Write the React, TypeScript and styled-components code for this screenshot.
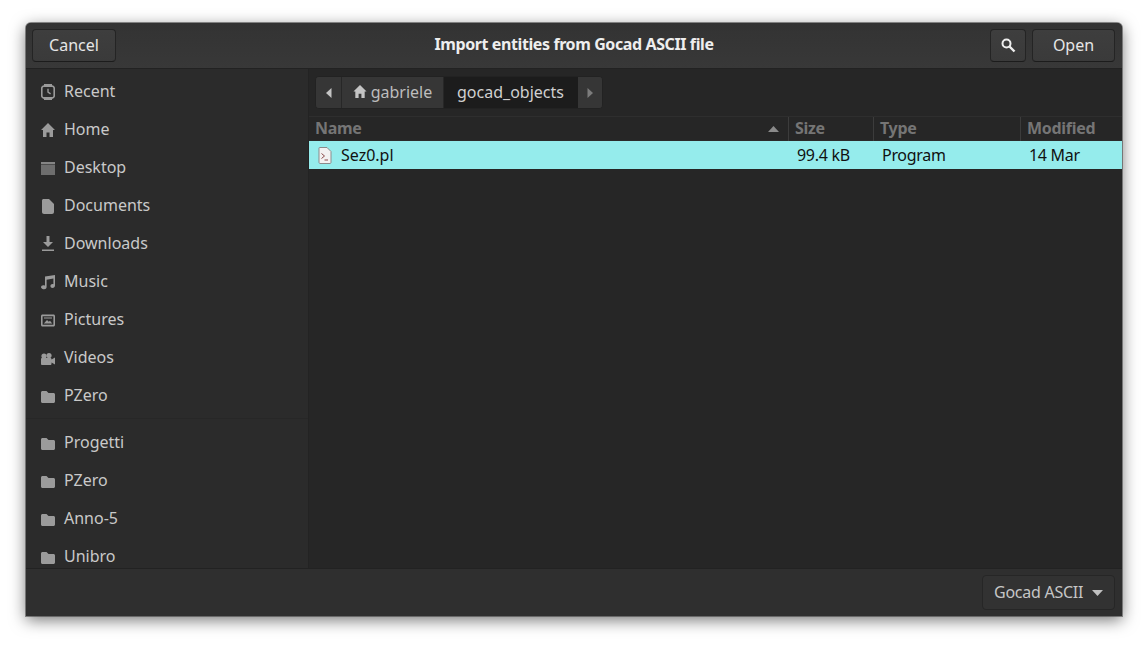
import styled, { createGlobalStyle } from "styled-components"

const GlobalStyle = createGlobalStyle`
  html, body {
    margin: 0;
    height: 645px;
    background: #fff;
    overflow: hidden;
    font-family: "Noto Sans", "Open Sans", sans-serif;
  }
  * { box-sizing: border-box; }
`

const Page = styled.div`
  width: 1148px;
  height: 645px;
  padding: 23px 26px 29px;
`

const Dialog = styled.div`
  width: 1096px;
  height: 593px;
  display: flex;
  flex-direction: column;
  border-radius: 5px 5px 0 0;
  background: #2b2b2b;
  overflow: hidden;
  box-shadow: 0 0 0 1px rgba(60, 60, 60, 0.55), 0 4px 16px rgba(0, 0, 0, 0.55);
`

const HeaderBar = styled.header`
  height: 46px;
  flex: none;
  display: flex;
  align-items: center;
  padding: 0 7px 0 6px;
  gap: 6px;
  background: linear-gradient(#333333, #383838);
  border-bottom: 1px solid #222;
`

const Title = styled.div`
  flex: 1;
  text-align: center;
  color: #eeeeee;
  font-size: 16px;
  font-weight: 700;
  letter-spacing: -0.4px;
  padding: 0 0 3px 42px;
`

const HeaderButton = styled.button<{ $w: number }>`
  width: ${(p) => p.$w}px;
  height: 33px;
  padding: 0 0 2px;
  display: flex;
  align-items: center;
  justify-content: center;
  border: 1px solid #242424;
  border-bottom-color: #1c1c1c;
  border-radius: 4px;
  background: linear-gradient(#3e3e3e, #3a3a3a);
  color: #e6e6e6;
  font: inherit;
  font-size: 16px;
`

const Body = styled.div`
  flex: 1;
  min-height: 0;
  display: flex;
`

const Sidebar = styled.nav`
  width: 283px;
  flex: none;
  background: #2b2b2b;
  border-right: 1px solid #232323;
  overflow: hidden;
  padding-top: 3px;
`

const Place = styled.div`
  height: 38px;
  display: flex;
  align-items: center;
  padding-left: 15px;
  gap: 9px;
  color: #c9c9c9;
  font-size: 16px;
`

const PlaceIcon = styled.svg`
  width: 14px;
  height: 16px;
  flex: none;
  fill: #9b9b9b;
  margin-top: 2px;
`

const Separator = styled.div`
  height: 1px;
  background: #272727;
  margin: 4px 0 4px;
`

const Main = styled.main`
  flex: 1;
  min-width: 0;
  display: flex;
  flex-direction: column;
  background: #262626;
`

const PathRow = styled.div`
  height: 47px;
  flex: none;
  display: flex;
  align-items: center;
  padding-left: 6px;
`

const PathBar = styled.div`
  display: flex;
  height: 33px;
  border: 1px solid #222;
  border-radius: 4px;
  overflow: hidden;
  background: #333;
`

const PathButton = styled.div<{ $w: number; $active?: boolean }>`
  width: ${(p) => p.$w}px;
  padding-bottom: 2px;
  display: flex;
  align-items: center;
  justify-content: center;
  gap: 4px;
  font-size: 16px;
  color: ${(p) => (p.$active ? "#d0d0d0" : "#bdbdbd")};
  background: ${(p) => (p.$active ? "#1c1c1c" : "#363636")};
  border-right: 1px solid ${(p) => (p.$active ? "#1c1c1c" : "#272727")};
  &:last-child {
    border-right: 0;
  }
`

const PathHome = styled.svg`
  width: 14px;
  height: 15px;
  flex: none;
  fill: #c4c4c4;
`

const Arrow = styled.svg<{ $dim?: boolean }>`
  width: 8px;
  height: 10px;
  margin-top: 2px;
  fill: ${(p) => (p.$dim ? "#7c7c7c" : "#c4c4c4")};
`

const ColumnHeader = styled.div`
  height: 25px;
  flex: none;
  display: grid;
  grid-template-columns: 480px 85px 147px 1fr;
  border-top: 1px solid #2e2e2e;
  border-bottom: 1px solid #2b2b2b;
`

const ColumnTitle = styled.div`
  display: flex;
  align-items: center;
  justify-content: space-between;
  padding: 0 9px 2px 6px;
  color: #757575;
  font-size: 16px;
  font-weight: 700;
  letter-spacing: -0.3px;
  border-right: 1px solid #3c3c3c;
  &:last-child {
    border-right: 0;
  }
`

const SortCaret = styled.svg`
  width: 11px;
  height: 6px;
  margin-top: 2px;
  fill: #8a8a8a;
`

const FileRow = styled.div`
  height: 28px;
  flex: none;
  display: grid;
  grid-template-columns: 480px 85px 147px 1fr;
  align-items: center;
  background: #95ecec;
  color: #111;
  font-size: 16px;
`

const NameCell = styled.div`
  display: flex;
  align-items: center;
  gap: 9px;
  padding-left: 9px;
`

const DataCell = styled.div`
  padding-left: 8px;
  letter-spacing: -0.3px;
`

const Footer = styled.footer`
  height: 48px;
  flex: none;
  display: flex;
  align-items: center;
  justify-content: flex-end;
  padding-right: 7px;
  background: #2f2f2f;
  border-top: 1px solid #222;
`

const FilterButton = styled.div`
  width: 133px;
  height: 35px;
  display: flex;
  align-items: center;
  justify-content: space-between;
  padding: 0 11px 2px 11px;
  border: 1px solid #262626;
  border-radius: 4px;
  background: #323232;
  color: #c6c6c6;
  font-size: 16px;
  letter-spacing: -0.25px;
`

const FilterCaret = styled.svg`
  width: 11px;
  height: 6px;
  margin-top: 2px;
  fill: #c0c0c0;
`

const folder = (
  <path d="M0 4.5C0 3.7.7 3 1.5 3H5.5L7.5 5H12.5C13.3 5 14 5.7 14 6.5V13.5C14 14.3 13.3 15 12.5 15H1.5C.7 15 0 14.3 0 13.5Z" />
)

const home = <path d="M7 1L14 8H12V15H8.5V10.5H5.5V15H2V8H0Z" />

const icons: Record<string, React.ReactNode> = {
  recent: (
    <path
      fillRule="evenodd"
      d="M3 0H11V1.2C12.7 1.5 14 2.6 14 4V12C14 13.4 12.7 14.6 11 14.9V16H3V14.9C1.3 14.6 0 13.4 0 12V4C0 2.6 1.3 1.5 3 1.2ZM3 3C2.2 3 1.6 3.6 1.6 4.3V11.7C1.6 12.4 2.2 13 3 13H11C11.8 13 12.4 12.4 12.4 11.7V4.3C12.4 3.6 11.8 3 11 3ZM6.3 4.8H7.7V7.7L10 9.3 9.2 10.4 6.3 8.4Z"
    />
  ),
  home,
  desktop: (
    <>
      <path d="M0 2H14V4H0Z" fill="#858585" />
      <path d="M0 4.5H14V15H0Z" fill="#6e6e6e" />
    </>
  ),
  documents: <path d="M2.5 1H8L13 6V14C13 15.1 12.1 16 11 16H3C1.9 16 1 15.1 1 14V2.5C1 1.7 1.7 1 2.5 1Z" />,
  downloads: <path d="M5.5 0H8.5V6H12L7 11 2 6H5.5ZM1 13.5H13V15H1Z" />,
  music: (
    <path d="M4 2.6L14 1V11.5C14 13 12.9 14 11.6 14 10.3 14 9.4 13.1 9.4 12 9.4 10.9 10.3 10 11.6 10 11.9 10 12.2 10 12.4 10.2V4.6L5.6 5.7V13C5.6 14.3 4.5 15.3 3.2 15.3 1.9 15.3 0 14.4 0 13.2 0 12.1 1 11.3 2.3 11.3 3 11.3 3.6 11.4 4 11.7Z" />
  ),
  pictures: (
    <path
      fillRule="evenodd"
      d="M1.5 2.5H12.5C13.3 2.5 14 3.2 14 4V13C14 13.8 13.3 14.5 12.5 14.5H1.5C.7 14.5 0 13.8 0 13V4C0 3.2.7 2.5 1.5 2.5ZM1.6 4.2V12.8H12.4V4.2ZM2.8 11.5L6 8 7.8 9.8 9 8.7 11.2 11.5ZM3 5.5H11V6.6H3Z"
    />
  ),
  videos: (
    <>
      <circle cx="3" cy="6" r="2.6" />
      <circle cx="8" cy="5.6" r="2.6" />
      <path d="M1 8H9.5C10 8 10.5 8.5 10.5 9V9.6L14 7.6V14.4L10.5 12.4V14C10.5 14.5 10 15 9.5 15H1C.5 15 0 14.5 0 14V9C0 8.5.5 8 1 8Z" />
    </>
  ),
  folder,
}

const topPlaces = [
  ["recent", "Recent"],
  ["home", "Home"],
  ["desktop", "Desktop"],
  ["documents", "Documents"],
  ["downloads", "Downloads"],
  ["music", "Music"],
  ["pictures", "Pictures"],
  ["videos", "Videos"],
  ["folder", "PZero"],
]

const bookmarks = ["Progetti", "PZero", "Anno-5", "Unibro"]

export default function App() {
  return (
    <Page>
      <GlobalStyle />
      <Dialog>
        <HeaderBar>
          <HeaderButton $w={84}>Cancel</HeaderButton>
          <Title>Import entities from Gocad ASCII file</Title>
          <HeaderButton $w={36}>
            <svg width="16" height="16" viewBox="0 0 16 16" fill="none" stroke="#eee" strokeWidth="2">
              <circle cx="6.5" cy="6.5" r="4" />
              <path d="M9.5 9.5L14.5 14.5" strokeWidth="2.4" />
            </svg>
          </HeaderButton>
          <HeaderButton $w={83}>Open</HeaderButton>
        </HeaderBar>
        <Body>
          <Sidebar>
            {topPlaces.map(([icon, label]) => (
              <Place key={label}>
                <PlaceIcon viewBox="0 0 14 16">{icons[icon]}</PlaceIcon>
                {label}
              </Place>
            ))}
            <Separator />
            {bookmarks.map((label) => (
              <Place key={label}>
                <PlaceIcon viewBox="0 0 14 16">{folder}</PlaceIcon>
                {label}
              </Place>
            ))}
          </Sidebar>
          <Main>
            <PathRow>
              <PathBar>
                <PathButton $w={26}>
                  <Arrow viewBox="0 0 8 10">
                    <path d="M6.5 0V10L1 5Z" />
                  </Arrow>
                </PathButton>
                <PathButton $w={102}>
                  <PathHome viewBox="0 0 14 16">{home}</PathHome>
                  gabriele
                </PathButton>
                <PathButton $w={134} $active>
                  gocad_objects
                </PathButton>
                <PathButton $w={24}>
                  <Arrow $dim viewBox="0 0 8 10">
                    <path d="M1.5 0V10L7 5Z" />
                  </Arrow>
                </PathButton>
              </PathBar>
            </PathRow>
            <ColumnHeader>
              <ColumnTitle>
                Name
                <SortCaret viewBox="0 0 11 6">
                  <path d="M5.5 0L11 6H0Z" />
                </SortCaret>
              </ColumnTitle>
              <ColumnTitle>Size</ColumnTitle>
              <ColumnTitle>Type</ColumnTitle>
              <ColumnTitle>Modified</ColumnTitle>
            </ColumnHeader>
            <FileRow>
              <NameCell>
                <svg width="14" height="17" viewBox="0 0 14 17">
                  <path d="M1.5.5H9L13 4.5V15.5C13 16 12.5 16.5 12 16.5H2C1.5 16.5 1 16 1 15.5V1C1 .7 1.2.5 1.5.5Z" fill="#f2f2f2" stroke="#8b8b8b" />
                  <path d="M3.5 6.5L6.5 9 3.5 11.5M6.5 13H10" fill="none" stroke="#8a4a4a" strokeWidth="1" />
                </svg>
                Sez0.pl
              </NameCell>
              <DataCell>99.4 kB</DataCell>
              <DataCell>Program</DataCell>
              <DataCell>14 Mar</DataCell>
            </FileRow>
          </Main>
        </Body>
        <Footer>
          <FilterButton>
            Gocad ASCII
            <FilterCaret viewBox="0 0 11 6">
              <path d="M0 0H11L5.5 6Z" />
            </FilterCaret>
          </FilterButton>
        </Footer>
      </Dialog>
    </Page>
  )
}
